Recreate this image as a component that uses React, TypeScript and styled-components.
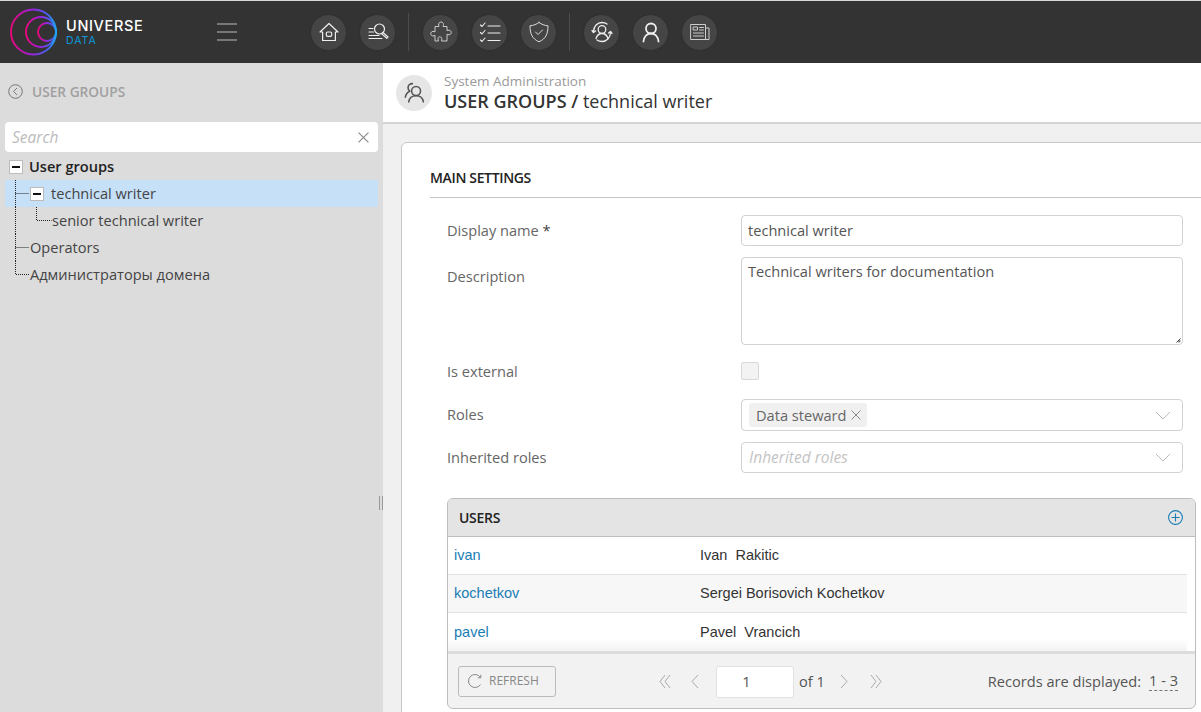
import React from 'react';
import styled, { createGlobalStyle } from 'styled-components';

const GlobalStyle = createGlobalStyle`
  html, body {
    margin: 0;
    padding: 0;
    overflow: hidden;
    background: #f0f0f0;
  }
  * {
    box-sizing: border-box;
  }
`;

const Page = styled.div`
  width: 1201px;
  height: 712px;
  overflow: hidden;
  display: flex;
  flex-direction: column;
  font-family: 'Open Sans', 'Liberation Sans', sans-serif;
  font-size: 14.6px;
  color: #333;
`;

const TopBar = styled.header`
  flex: none;
  height: 63px;
  display: flex;
  align-items: center;
  background: #333333;
  border-top: 1px solid #d8d8d8;
`;

const Brand = styled.div`
  width: 217px;
  display: flex;
  align-items: center;
  padding-left: 9px;
  gap: 7px;
`;

const BrandText = styled.div`
  display: flex;
  flex-direction: column;
  padding-top: 1px;
  font-family: 'Inter', 'Open Sans', sans-serif;
  line-height: 1;
`;

const BrandName = styled.span`
  color: #fff;
  font-size: 14.5px;
  font-weight: 500;
  letter-spacing: 0.65px;
`;

const BrandSub = styled.span`
  margin-top: 2px;
  color: #0b9bdc;
  font-size: 10.5px;
  letter-spacing: 1px;
`;

const Burger = styled.div`
  width: 20px;
  margin-right: 73px;
  display: flex;
  flex-direction: column;
  gap: 6px;
  span {
    height: 2px;
    background: #777;
  }
`;

const NavGroup = styled.nav`
  display: flex;
  align-items: center;
  gap: 12px;
`;

const NavButton = styled.button`
  width: 37px;
  height: 37px;
  padding: 0;
  border-radius: 50%;
  border: 1px solid #2e2e2e;
  background: #454545;
  color: #eee;
  display: flex;
  align-items: center;
  justify-content: center;
`;

const NavDivider = styled.div`
  width: 1px;
  height: 38px;
  margin-right: 1px;
  background: #4d4d4d;
`;

const Body = styled.div`
  flex: 1;
  min-height: 0;
  display: flex;
`;

const Sidebar = styled.aside`
  position: relative;
  flex: none;
  width: 383px;
  background: #dcdcdc;
  padding: 0 5px;
`;

const SplitHandle = styled.div`
  position: absolute;
  right: 0;
  top: 433px;
  width: 4px;
  height: 14px;
  border-left: 1px solid #999;
  border-right: 1px solid #999;
`;

const SideTitle = styled.div`
  height: 57px;
  margin-bottom: 2px;
  display: flex;
  align-items: center;
  gap: 9px;
  padding: 0 0 0 3px;
  color: #a0a0a0;
  font-size: 13.7px;
  font-weight: 600;
`;

const SearchBox = styled.div`
  height: 30px;
  display: flex;
  align-items: center;
  justify-content: space-between;
  padding: 0 9px 0 7px;
  background: #fff;
  border-radius: 4px;
  color: #bbb;
  font-style: italic;
  font-size: 15.5px;
`;

const TreeList = styled.ul`
  list-style: none;
  margin: 1px 0 0;
  padding: 0;
`;

const TreeRow = styled.li<{ $active?: boolean; $strong?: boolean }>`
  height: 27px;
  display: flex;
  align-items: center;
  padding-bottom: 2px;
  background: ${p => (p.$active ? '#c6e0f8' : 'transparent')};
  color: ${p => (p.$strong ? '#222' : '#444')};
  font-weight: ${p => (p.$strong ? 600 : 400)};
  white-space: nowrap;
`;

const ToggleBox = styled.span<{ $offset?: number }>`
  flex: none;
  width: 14px;
  height: 14px;
  margin-top: 2px;
  margin-left: ${p => p.$offset ?? 0}px;
  margin-right: ${p => (p.$offset ? 6 : 7)}px;
  display: flex;
  align-items: center;
  justify-content: center;
  background: #fff;
  border: 1px solid #bbb;
  &::after {
    content: '';
    width: 8px;
    height: 2px;
    background: #111;
  }
`;

const Guide = styled.svg`
  flex: none;
  align-self: flex-start;
  height: 27px;
`;

const Main = styled.main`
  flex: 1;
  min-width: 0;
  display: flex;
  flex-direction: column;
`;

const PageHeader = styled.div`
  flex: none;
  height: 61px;
  display: flex;
  align-items: center;
  gap: 12px;
  padding: 0 0 0 13px;
  background: #fff;
  border-bottom: 2px solid #d4d4d4;
`;

const HeaderAvatar = styled.div`
  width: 36px;
  height: 36px;
  border-radius: 50%;
  background: #e6e6e6;
  display: flex;
  align-items: center;
  justify-content: center;
  color: #555;
`;

const HeaderText = styled.div`
  display: flex;
  flex-direction: column;
`;

const HeaderSub = styled.span`
  color: #999;
  font-size: 13.5px;
  line-height: 17px;
`;

const HeaderTitle = styled.span`
  color: #333;
  font-size: 18px;
  line-height: 23px;
  b {
    font-weight: 600;
  }
`;

const Content = styled.div`
  flex: 1;
  min-height: 0;
  background: #f0f0f0;
  padding: 18px 0 0 18px;
  overflow: hidden;
`;

const Card = styled.section`
  width: 830px;
  height: 640px;
  padding: 0 0 0 28px;
  background: #fff;
  border: 1px solid #c8c8c8;
  border-radius: 6px;
`;

const SectionTitle = styled.h2`
  margin: 0;
  height: 55px;
  display: flex;
  align-items: center;
  padding-top: 15px;
  border-bottom: 1px solid #c4c4c4;
  color: #222;
  font-size: 14px;
  font-weight: 600;
  letter-spacing: -0.35px;
`;

const Form = styled.div`
  padding: 17px 0 0 17px;
  width: 753px;
`;

const FieldRow = styled.div<{ $height: number; $gap: number; $top?: boolean }>`
  display: grid;
  grid-template-columns: 294px 442px;
  grid-template-rows: ${p => p.$height}px;
  height: ${p => p.$height}px;
  margin-bottom: ${p => p.$gap}px;
  align-items: ${p => (p.$top ? 'start' : 'center')};
`;

const Label = styled.label<{ $pad?: number; $lift?: number }>`
  color: #666;
  padding-top: ${p => p.$pad ?? 0}px;
  padding-bottom: ${p => p.$lift ?? 0}px;
  span {
    color: #444;
  }
`;

const TextInput = styled.div`
  height: 100%;
  display: flex;
  align-items: center;
  padding: 0 6px 2px;
  border: 1px solid #d2d2d2;
  border-radius: 4px;
  color: #555;
`;

const TextArea = styled.div`
  position: relative;
  height: 100%;
  padding: 3px 6px;
  border: 1px solid #d2d2d2;
  border-radius: 4px;
  color: #555;
`;

const ResizeGrip = styled.svg`
  position: absolute;
  right: 1px;
  bottom: 1px;
`;

const Checkbox = styled.div`
  width: 18px;
  height: 18px;
  background: #f3f3f3;
  border: 1px solid #d8d8d8;
  border-radius: 2px;
`;

const SelectBox = styled.div`
  height: 100%;
  display: flex;
  align-items: center;
  justify-content: space-between;
  padding: 0 11px 0 7px;
  border: 1px solid #d2d2d2;
  border-radius: 4px;
`;

const Chip = styled.span`
  height: 24px;
  display: flex;
  align-items: center;
  gap: 5px;
  padding: 0 6px 0 7px;
  border-radius: 3px;
  background: #f0f0f0;
  color: #666;
`;

const Placeholder = styled.span`
  padding-bottom: 2px;
  color: #c4c4c4;
  font-style: italic;
  font-size: 15.5px;
`;

const Panel = styled.div`
  width: 749px;
  margin-top: 25px;
  border: 1px solid #bdbdbd;
  border-radius: 6px;
  overflow: hidden;
  background: #f2f2f2;
`;

const PanelHead = styled.div`
  height: 38px;
  display: flex;
  align-items: center;
  justify-content: space-between;
  padding: 0 12px 0 11px;
  background: #e4e4e4;
  border-bottom: 1px solid #bdbdbd;
  color: #222;
  font-weight: 600;
  font-size: 14px;
  letter-spacing: -0.3px;
`;

const Rows = styled.div`
  background: #fff;
  border-bottom: 3px solid #dcdcdc;
`;

const UserRow = styled.div<{ $alt?: boolean; $fade?: boolean }>`
  width: 739px;
  height: 38px;
  display: grid;
  grid-template-columns: 246px 1fr;
  align-items: center;
  padding: 0 0 ${p => (p.$fade ? 0 : 1)}px 6px;
  font-family: 'Liberation Sans', Arial, sans-serif;
  font-size: 14.5px;
  color: #333;
  background: ${p =>
    p.$alt ? '#f7f7f7' : p.$fade ? 'linear-gradient(#fff 70%, #f2f2f2)' : '#fff'};
  border-bottom: ${p => (p.$fade ? 'none' : '1px solid #e2e2e2')};
`;

const UserLink = styled.a`
  color: #1a7db5;
`;

const PanelFoot = styled.div`
  height: 54px;
  display: flex;
  align-items: center;
  padding: 1px 17px 0 10px;
`;

const RefreshButton = styled.button`
  width: 98px;
  height: 31px;
  display: flex;
  align-items: center;
  gap: 6px;
  padding: 0 0 2px 8px;
  background: transparent;
  border: 1px solid #bbb;
  border-radius: 3px;
  color: #888;
  font-family: inherit;
  font-size: 12px;
`;

const Pager = styled.div`
  margin-left: 102px;
  display: flex;
  align-items: center;
`;

const PagerIcon = styled.svg<{ $gap: number }>`
  flex: none;
  margin-right: ${p => p.$gap}px;
  color: #aaa;
`;

const PageInput = styled.div`
  width: 78px;
  height: 32px;
  display: flex;
  align-items: center;
  justify-content: center;
  margin-right: 5px;
  padding: 0 17px 2px 0;
  background: #fff;
  border: 1px solid #e2e2e2;
  border-radius: 3px;
  color: #555;
`;

const PageOf = styled.span`
  margin-right: 12px;
  padding-bottom: 2px;
  color: #555;
`;

const Records = styled.div`
  margin-left: auto;
  display: flex;
  gap: 8px;
  padding-bottom: 2px;
  color: #555;
  span {
    border-bottom: 1px dashed #777;
    line-height: 19px;
  }
`;

const Line = (p: React.SVGProps<SVGSVGElement> & { size?: number; view?: number }) => {
  const { size = 24, view = 24, children, ...rest } = p;
  return (
    <svg
      width={size}
      height={size}
      viewBox={`0 0 ${view} ${view}`}
      fill="none"
      stroke="currentColor"
      strokeWidth="1.2"
      strokeLinecap="round"
      strokeLinejoin="round"
      {...rest}
    >
      {children}
    </svg>
  );
};

const Logo = () => (
  <svg width="50" height="50" viewBox="0 0 50 50" fill="none" strokeWidth="1.8">
    <defs>
      <linearGradient id="ring" x1="0" y1="0.5" x2="1" y2="0.5">
        <stop offset="0" stopColor="#f0047f" />
        <stop offset="0.45" stopColor="#a01fe0" />
        <stop offset="0.8" stopColor="#4a62f5" />
        <stop offset="1" stopColor="#1ea9f0" />
      </linearGradient>
    </defs>
    <circle cx="24.5" cy="25" r="22.5" stroke="url(#ring)" />
    <circle cx="32" cy="25" r="15" stroke="url(#ring)" />
    <circle cx="38" cy="25" r="9" stroke="url(#ring)" />
  </svg>
);

const navIcons = {
  home: (
    <Line>
      <path d="M12 3.500 21 12h-2.600v8.500H5.600V12H3z" />
      <rect x="9.300" y="12" width="5.400" height="4.400" rx="1.400" />
    </Line>
  ),
  search: (
    <Line>
      <circle cx="13.500" cy="9" r="5" />
      <path d="m17 12.500 5 4.500-1.200 1.300-5-4.400" />
      <path d="M3 8.500h4M3 12h4.500M3 15.500h10M3 18.500h13" />
    </Line>
  ),
  puzzle: (
    <Line strokeWidth="1" stroke="#ccc">
      <path d="M9.500 4.500c0-1.500 1.200-2.500 2.500-2.500s2.500 1 2.500 2.500c0 .8-.5 1.300-.5 2h4v4.200c.7 0 1.200-.5 2-.5 1.400 0 2.200 1.100 2.200 2.300s-.8 2.300-2.200 2.300c-.8 0-1.300-.5-2-.5V21h-5.500c0-.7.4-1.200.4-2 0-1.300-1-2.200-2.300-2.200S9 17.700 9 19c0 .8.500 1.300.500 2H6v-5.500c-.7 0-1.300.5-2 .5-1.300 0-2.200-1-2.200-2.300S2.700 11.400 4 11.400c.7 0 1.300.5 2 .5V6.500h4c0-.7-.5-1.200-.5-2z" />
    </Line>
  ),
  checks: (
    <Line strokeWidth="1.100">
      <path d="m2.500 5 1.500 1.500L7 3M2.500 12.500 4 14l3-3.500M2.500 20 4 21.500l3-3.500" />
      <path d="M10 6h12M10 13h12M10 20.500h12" />
    </Line>
  ),
  shield: (
    <Line strokeWidth="1" stroke="#ddd">
      <path d="M12 2.500c2.500 1.800 5.500 3 9 3.300 0 7.500-2 13-9 16-7-3-9-8.500-9-16 3.500-.3 6.500-1.500 9-3.300z" />
      <path d="m8.500 12 2.500 2.500 4.500-4.500" />
    </Line>
  ),
  rotate: (
    <Line strokeWidth="1.300">
      <circle cx="12" cy="9.500" r="3.800" />
      <path d="M6 18.500c1-3 3-5 6-5s5 2 6 5" />
      <path d="M3.500 12C3.500 6 7.500 2.500 12 2.500c2 0 3.700.6 5 1.600M20.500 12c0 6-4 9.500-8.500 9.500-2 0-3.700-.6-5-1.600" />
      <path d="m2 10.500 1.500 2 2-1.500M22 13.500l-1.500-2-2 1.500" />
    </Line>
  ),
  user: (
    <Line strokeWidth="1.800">
      <circle cx="12" cy="8.500" r="5" />
      <path d="M4.500 21.500c.5-4.800 3.500-8 7.500-8s7 3.200 7.500 8" />
    </Line>
  ),
  news: (
    <Line strokeWidth="1" stroke="#ccc">
      <path d="M3 4.500h14.500v15H3zM17.500 8H21v11.500h-3.500" />
      <rect x="5.500" y="7" width="4" height="3" />
      <path d="M11.500 7.500h4M11.500 10h4M5.500 13h10M5.500 16h10" />
    </Line>
  ),
};

const GroupsGlyph = ({ size = 25 }: { size?: number }) => (
  <Line size={size} strokeWidth="1.500">
    <circle cx="13.500" cy="10.500" r="4.300" />
    <path d="M6.500 21c.5-3.500 3-5.800 7-5.800s6.500 2.300 7 5.800" />
    <path d="M10 3.500C7.500 3.500 5.800 5.300 5.800 7.500c0 1.400.6 2.500 1.700 3.300-2.300 1-3.800 3-4.300 5.700" />
  </Line>
);

const Chevron = () => (
  <svg width="16" height="9" viewBox="0 0 16 9" fill="none" stroke="#bbb" strokeWidth="1">
    <path d="m1 1 7 7 7-7" />
  </svg>
);

const Cross = ({ size, color }: { size: number; color: string }) => (
  <svg width={size} height={size} viewBox="0 0 10 10" fill="none" stroke={color} strokeWidth="1">
    <path d="m.5.5 9 9M9.500.5l-9 9" />
  </svg>
);

const TreeGuide = ({ width, d }: { width: number; d: string }) => (
  <Guide width={width} viewBox={`0 0 ${width} 27`} fill="none" stroke="#222" strokeWidth="1" strokeDasharray="1 1">
    <path d={d} />
  </Guide>
);

const pagerPaths = {
  first: 'M7 1 2 7.500 7 14M12 1 7 7.500 12 14',
  prev: 'M9 1 3 7.500 9 14',
  next: 'M4 1 10 7.500 4 14',
  last: 'M2 1 7 7.500 2 14M7 1 12 7.500 7 14',
};

const PagerArrow = ({ d, gap }: { d: string; gap: number }) => (
  <PagerIcon $gap={gap} width="14" height="15" viewBox="0 0 14 15" fill="none" stroke="currentColor" strokeWidth="1">
    <path d={d} />
  </PagerIcon>
);

const users = [
  { login: 'ivan', name: 'Ivan\u00a0\u00a0Rakitic' },
  { login: 'kochetkov', name: 'Sergei Borisovich Kochetkov' },
  { login: 'pavel', name: 'Pavel\u00a0\u00a0Vrancich' },
];

export default function App() {
  return (
    <Page>
      <GlobalStyle />
      <TopBar>
        <Brand>
          <Logo />
          <BrandText>
            <BrandName>UNIVERSE</BrandName>
            <BrandSub>DATA</BrandSub>
          </BrandText>
        </Brand>
        <Burger>
          <span />
          <span />
          <span />
        </Burger>
        <NavGroup>
          <NavButton>{navIcons.home}</NavButton>
          <NavButton>{navIcons.search}</NavButton>
          <NavDivider />
          <NavButton>{navIcons.puzzle}</NavButton>
          <NavButton>{navIcons.checks}</NavButton>
          <NavButton>{navIcons.shield}</NavButton>
          <NavDivider />
          <NavButton>{navIcons.rotate}</NavButton>
          <NavButton>{navIcons.user}</NavButton>
          <NavButton>{navIcons.news}</NavButton>
        </NavGroup>
      </TopBar>
      <Body>
        <Sidebar>
          <SideTitle>
            <svg width="15" height="15" viewBox="0 0 15 15" fill="none" stroke="#777" strokeWidth="1">
              <circle cx="7.500" cy="7.500" r="6.800" />
              <path d="M9 4 5.500 7.500 9 11" />
            </svg>
            USER GROUPS
          </SideTitle>
          <SearchBox>
            Search
            <Cross size={11} color="#888" />
          </SearchBox>
          <TreeList>
            <TreeRow $strong>
              <ToggleBox $offset={4} />
              User groups
            </TreeRow>
            <TreeRow $active>
              <TreeGuide width={25} d="M10.500 0v27M10.500 13.500h14" />
              <ToggleBox />
              technical writer
            </TreeRow>
            <TreeRow>
              <TreeGuide width={47} d="M10.500 0v27M31.500 0v13.500h15" />
              senior technical writer
            </TreeRow>
            <TreeRow>
              <TreeGuide width={25} d="M10.500 0v27M10.500 13.500h14" />
              Operators
            </TreeRow>
            <TreeRow>
              <TreeGuide width={25} d="M10.500 0v13.500h14" />
              Администраторы домена
            </TreeRow>
          </TreeList>
          <SplitHandle />
        </Sidebar>
        <Main>
          <PageHeader>
            <HeaderAvatar>
              <GroupsGlyph />
            </HeaderAvatar>
            <HeaderText>
              <HeaderSub>System Administration</HeaderSub>
              <HeaderTitle>
                <b>USER GROUPS /</b> technical writer
              </HeaderTitle>
            </HeaderText>
          </PageHeader>
          <Content>
            <Card>
              <SectionTitle>MAIN SETTINGS</SectionTitle>
              <Form>
                <FieldRow $height={31} $gap={11}>
                  <Label $lift={2}>
                    Display name <span>*</span>
                  </Label>
                  <TextInput>technical writer</TextInput>
                </FieldRow>
                <FieldRow $height={88} $gap={17} $top>
                  <Label $pad={9}>Description</Label>
                  <TextArea>
                    Technical writers for documentation
                    <ResizeGrip width="5" height="5" viewBox="0 0 5 5" fill="none" stroke="#444" strokeWidth="1">
                      <path d="M.5 4.500 4.500.5M3 4.500V3h1.500" />
                    </ResizeGrip>
                  </TextArea>
                </FieldRow>
                <FieldRow $height={18} $gap={19}>
                  <Label $lift={1}>Is external</Label>
                  <Checkbox />
                </FieldRow>
                <FieldRow $height={32} $gap={11}>
                  <Label $lift={2}>Roles</Label>
                  <SelectBox>
                    <Chip>
                      Data steward
                      <Cross size={10} color="#888" />
                    </Chip>
                    <Chevron />
                  </SelectBox>
                </FieldRow>
                <FieldRow $height={31} $gap={0}>
                  <Label $lift={2}>Inherited roles</Label>
                  <SelectBox>
                    <Placeholder>Inherited roles</Placeholder>
                    <Chevron />
                  </SelectBox>
                </FieldRow>
                <Panel>
                  <PanelHead>
                    USERS
                    <svg width="15" height="15" viewBox="0 0 15 15" fill="none" stroke="#1a7db5" strokeWidth="1.100">
                      <circle cx="7.500" cy="7.500" r="6.900" />
                      <path d="M7.500 3.500v8M3.500 7.500h8" />
                    </svg>
                  </PanelHead>
                  <Rows>
                    {users.map((u, i) => (
                      <UserRow key={u.login} $alt={i === 1} $fade={i === 2}>
                        <UserLink>{u.login}</UserLink>
                        <span>{u.name}</span>
                      </UserRow>
                    ))}
                  </Rows>
                  <PanelFoot>
                    <RefreshButton>
                      <svg width="16" height="16" viewBox="0 0 16 16" fill="none" stroke="#888" strokeWidth="1">
                        <path d="M13.500 4.500A6.500 6.500 0 1 0 13.500 11.500" />
                        <path d="M13.800 1.800v3h-3" />
                      </svg>
                      REFRESH
                    </RefreshButton>
                    <Pager>
                      <PagerArrow d={pagerPaths.first} gap={17} />
                      <PagerArrow d={pagerPaths.prev} gap={13} />
                      <PageInput>1</PageInput>
                      <PageOf>of 1</PageOf>
                      <PagerArrow d={pagerPaths.next} gap={18} />
                      <PagerArrow d={pagerPaths.last} gap={0} />
                    </Pager>
                    <Records>
                      Records are displayed:
                      <span>1 - 3</span>
                    </Records>
                  </PanelFoot>
                </Panel>
              </Form>
            </Card>
          </Content>
        </Main>
      </Body>
    </Page>
  );
}
